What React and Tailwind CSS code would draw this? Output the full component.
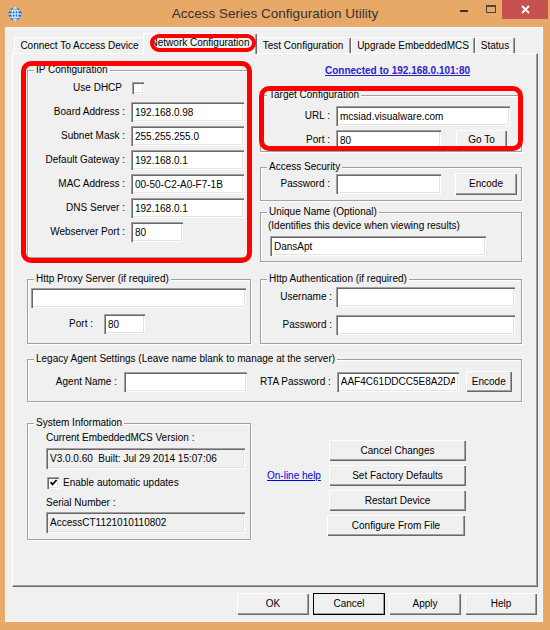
import React from "react";

// classic Win32 3D edges
const SUNKEN =
  "shadow-[inset_1px_1px_0_#a0a0a0,inset_2px_2px_0_#696969,inset_-1px_-1px_0_#ffffff,inset_-2px_-2px_0_#e3e3e3]";
const RAISED =
  "shadow-[inset_1px_1px_0_#ffffff,inset_-1px_-1px_0_#696969,inset_-2px_-2px_0_#a0a0a0]";

function Group({ title, className = "", children }) {
  return (
    <div
      className={`relative border border-[#a0a0a0] shadow-[inset_1px_1px_0_#ffffff,1px_1px_0_#ffffff] ${className}`}
    >
      <span className="absolute -top-[7px] left-[6px] whitespace-nowrap bg-[#f0f0f0] px-[2px] leading-[12px]">
        {title}
      </span>
      {children}
    </div>
  );
}

function Field({ value = "", className = "", gray }) {
  return (
    <input
      readOnly
      defaultValue={value}
      className={`h-[20px] px-[4px] outline-none ${gray ? "bg-[#f0f0f0]" : "bg-white"} ${SUNKEN} ${className}`}
    />
  );
}

function Btn({ children, className = "", isDefault }) {
  return (
    <button
      className={`flex items-center justify-center bg-[#f0f0f0] ${RAISED} ${
        isDefault ? "outline outline-1 outline-black -outline-offset-1" : ""
      } ${className}`}
    >
      {children}
    </button>
  );
}

function Check({ checked, className = "" }) {
  return (
    <span
      className={`inline-flex h-[12px] w-[12px] items-center justify-center bg-white ${SUNKEN} ${className}`}
    >
      {checked && (
        <svg width="9" height="9" viewBox="0 0 9 9">
          <path d="M1.5 4.2 L3.6 6.4 L7.6 2" fill="none" stroke="#000" strokeWidth="1.7" />
        </svg>
      )}
    </span>
  );
}

function Globe() {
  return (
    <svg width="14" height="14" viewBox="0 0 14 14">
      <circle cx="7" cy="7" r="6.5" fill="#1c6cc0" />
      <ellipse cx="7" cy="7" rx="3" ry="6.3" fill="none" stroke="#fff" strokeWidth="1" />
      <line x1="7" y1="0.5" x2="7" y2="13.5" stroke="#fff" strokeWidth="1" />
      <line x1="0.5" y1="7" x2="13.5" y2="7" stroke="#fff" strokeWidth="1" />
      <line x1="1.6" y1="3.8" x2="12.4" y2="3.8" stroke="#fff" strokeWidth="1" />
      <line x1="1.6" y1="10.2" x2="12.4" y2="10.2" stroke="#fff" strokeWidth="1" />
    </svg>
  );
}

function Tab({ label, className = "" }) {
  return (
    <div
      className={`flex h-[16px] items-center justify-center rounded-t-[2px] border-l border-t border-r border-l-white border-t-white border-r-[#696969] shadow-[inset_-1px_0_0_#a0a0a0] ${className}`}
    >
      {label}
    </div>
  );
}

const ipRows = [
  ["Board Address :", "192.168.0.98", "w-[113px]"],
  ["Subnet Mask :", "255.255.255.0", "w-[113px]"],
  ["Default Gateway :", "192.168.0.1", "w-[113px]"],
  ["MAC Address :", "00-50-C2-A0-F7-1B", "w-[113px]"],
  ["DNS Server :", "192.168.0.1", "w-[113px]"],
  ["Webserver Port :", "80", "w-[52px]"],
];

export default function App() {
  return (
    <div className="relative h-[630px] w-[550px] overflow-hidden bg-[#e8a868] font-['Liberation_Sans',Arial,sans-serif] text-[10px] leading-[12px] text-black">
      {/* title bar */}
      <div className="grid h-[27px] grid-cols-[1fr_auto_1fr]">
        <div className="flex items-center pl-[8px]">
          <Globe />
        </div>
        <div className="flex items-center text-[13.5px] text-[#333333]">
          Access Series Configuration Utility
        </div>
        <div className="flex items-start justify-end pr-[2px]">
          <div className="flex h-[19px] w-[24px] items-start pl-[5px] pt-[10px]">
            <div className="h-[2px] w-[8px] bg-[#333333]" />
          </div>
          <div className="flex h-[19px] w-[23px] items-start justify-center pt-[5px]">
            <div className="h-[8px] w-[10px] border border-t-2 border-[#444444]" />
          </div>
          <div className="flex h-[19px] w-[46px] items-center justify-center bg-[#c75050]">
            <svg width="9" height="9" viewBox="0 0 9 9">
              <path d="M1 1 L8 8 M8 1 L1 8" stroke="#fff" strokeWidth="1.8" />
            </svg>
          </div>
        </div>
      </div>

      {/* client area */}
      <div className="ml-[5px] h-[595px] w-[538px] border border-[#f7f7f7] bg-[#f0f0f0]">
        {/* tabs */}
        <div className="ml-[8px] flex h-[25px] items-end">
          <Tab label="Connect To Access Device" className="w-[131px]" />
          <div className="relative z-10 -mx-[2px] -mb-[1px] flex h-[21px] w-[114px] items-center justify-center rounded-t-[2px] border-l border-t border-r border-l-white border-t-white border-r-[#696969] bg-[#f0f0f0] pb-[2px] shadow-[inset_-1px_0_0_#a0a0a0]">
            Network Configuration
          </div>
          <Tab label="Test Configuration" className="w-[96px]" />
          <Tab label="Upgrade EmbeddedMCS" className="w-[124px]" />
          <Tab label="Status" className="w-[40px]" />
        </div>

        {/* tab page */}
        <div className="ml-[6px] h-[534px] w-[526px] border border-b-[#696969] border-l-white border-r-[#696969] border-t-white shadow-[inset_-1px_-1px_0_#a0a0a0]">
          <div className="flex items-start">
            <Group title="IP Configuration" className="ml-[14px] mt-[16px] h-[188px] w-[221px]">
              <div className="mt-[10px] flex h-[14px] items-center">
                <span className="w-[94px] text-right">Use DHCP</span>
                <Check className="ml-[10px]" />
              </div>
              <div className="mt-[7px] flex flex-col gap-[4px]">
                {ipRows.map(([label, value, w]) => (
                  <div key={label} className="flex items-center">
                    <span className="w-[97px] text-right">{label}</span>
                    <Field className={`ml-[6px] ${w}`} value={value} />
                  </div>
                ))}
              </div>
            </Group>

            <div className="ml-[12px] w-[262px]">
              <div className="mt-[11px] h-[12px] pl-[65px]">
                <span className="font-bold text-[#2a22cc] underline">Connected to 192.168.0.101:80</span>
              </div>

              <Group title="Target Configuration" className="mt-[18px] h-[57px] w-full">
                <div className="mt-[10px] flex items-center">
                  <span className="w-[69px] text-right">URL :</span>
                  <Field className="ml-[6px] w-[174px]" value="mcsiad.visualware.com" />
                </div>
                <div className="mt-[4px] flex items-center">
                  <span className="w-[69px] text-right">Port :</span>
                  <Field className="ml-[6px] w-[105px]" value="80" />
                  <Btn className="ml-[15px] h-[20px] w-[51px]">Go To</Btn>
                </div>
              </Group>

              <Group title="Access Security" className="mt-[15px] h-[34px] w-full">
                <div className="mt-[5px] flex items-center">
                  <span className="w-[69px] text-right">Password :</span>
                  <Field className="ml-[6px] h-[19px] w-[105px]" />
                  <Btn className="ml-[14px] h-[22px] w-[62px]">Encode</Btn>
                </div>
              </Group>

              <Group title="Unique Name (Optional)" className="mt-[11px] h-[50px] w-full">
                <div className="mt-[7px] pl-[7px]">(Identifies this device when viewing results)</div>
                <Field className="ml-[9px] mt-[4px] block w-[216px]" value="DansApt" />
              </Group>
            </div>
          </div>

          <div className="mt-[17px] flex items-start">
            <Group title="Http Proxy Server (if required)" className="ml-[14px] h-[65px] w-[224px]">
              <Field className="ml-[3px] mt-[8px] block w-[215px]" />
              <div className="mt-[6px] flex items-center">
                <span className="w-[65px] text-right">Port :</span>
                <Field className="ml-[11px] w-[41px]" value="80" />
              </div>
            </Group>
            <Group title="Http Authentication (if required)" className="ml-[9px] h-[65px] w-[262px]">
              <div className="mt-[7px] flex items-center">
                <span className="w-[71px] text-right">Username :</span>
                <Field className="ml-[4px] w-[179px]" />
              </div>
              <div className="mt-[8px] flex items-center">
                <span className="w-[71px] text-right">Password :</span>
                <Field className="ml-[4px] w-[179px]" />
              </div>
            </Group>
          </div>

          <Group
            title="Legacy Agent Settings (Leave name blank to manage at the server)"
            className="ml-[14px] mt-[15px] h-[43px] w-[495px]"
          >
            <div className="mt-[11px] flex items-center">
              <span className="w-[89px] text-right">Agent Name :</span>
              <Field className="ml-[7px] w-[123px]" />
              <span className="ml-[13px]">RTA Password :</span>
              <Field className="ml-[6px] w-[122px]" value="AAF4C61DDCC5E8A2DAE3F07" />
              <Btn className="ml-[7px] h-[21px] w-[46px]">Encode</Btn>
            </div>
          </Group>

          <div className="mt-[21px] flex items-start">
            <Group title="System Information" className="ml-[14px] h-[117px] w-[224px]">
              <div className="mt-[8px] pl-[18px]">Current EmbeddedMCS Version :</div>
              <Field
                gray
                className="ml-[18px] mt-[4px] block h-[21px] w-[199px]"
                value="V3.0.0.60  Built: Jul 29 2014 15:07:06"
              />
              <div className="ml-[19px] mt-[7px] flex h-[13px] items-center">
                <Check checked />
                <span className="ml-[4px]">Enable automatic updates</span>
              </div>
              <div className="mt-[8px] pl-[18px]">Serial Number :</div>
              <Field gray className="ml-[18px] mt-[3px] block h-[21px] w-[199px]" value="AccessCT1121010110802" />
            </Group>

            <div className="ml-[16px] mt-[47px] w-[62px]">
              <span className="text-[#0000ee] underline">On-line help</span>
            </div>
            <div className="mt-[17px] flex flex-col items-start gap-[4px]">
              <Btn className="h-[21px] w-[137px]">Cancel Changes</Btn>
              <Btn className="h-[21px] w-[137px]">Set Factory Defaults</Btn>
              <Btn className="h-[21px] w-[137px]">Restart Device</Btn>
              <Btn className="-ml-[2px] h-[21px] w-[138px]">Configure From File</Btn>
            </div>
          </div>
        </div>

        {/* dialog buttons */}
        <div className="mt-[6px] flex justify-end gap-[4px] pr-[5px]">
          <Btn className="h-[22px] w-[72px]">OK</Btn>
          <Btn isDefault className="h-[22px] w-[72px]">Cancel</Btn>
          <Btn className="h-[22px] w-[72px]">Apply</Btn>
          <Btn className="h-[22px] w-[72px]">Help</Btn>
        </div>
      </div>

      {/* red highlight marks */}
      <div className="pointer-events-none absolute left-[150px] top-[34px] z-20 h-[18px] w-[106px] rounded-full border-[4px] border-[#ff0000]" />
      <div className="pointer-events-none absolute left-[21px] top-[61px] z-20 h-[202px] w-[231px] rounded-[10px] border-[5px] border-[#ff0000]" />
      <div className="pointer-events-none absolute left-[259px] top-[86px] z-20 h-[65px] w-[264px] rounded-[10px] border-[5px] border-[#ff0000]" />
    </div>
  );
}
